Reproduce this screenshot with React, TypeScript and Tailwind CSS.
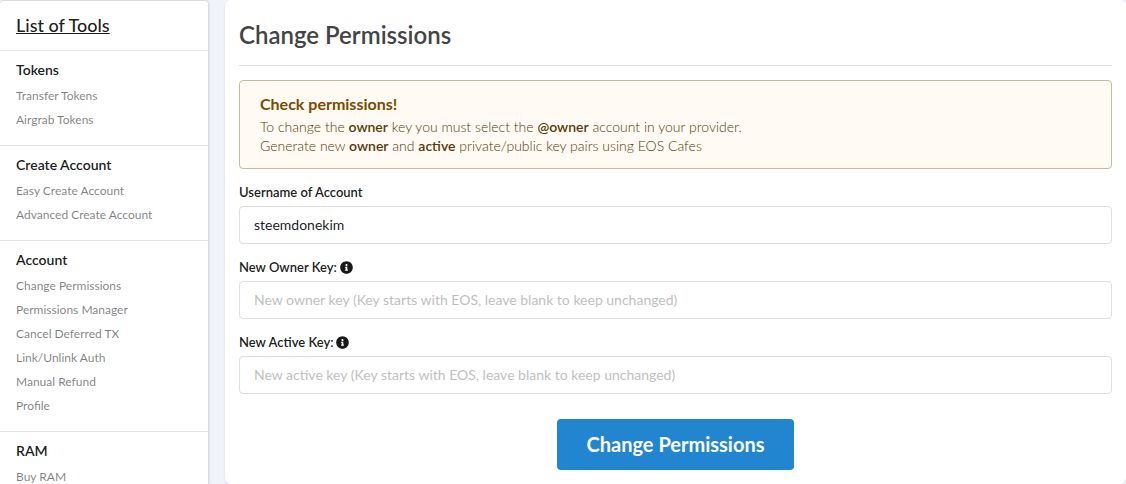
import { useState } from "react";
import type { ReactNode } from "react";
import { FaInfoCircle } from "react-icons/fa";

const toolGroups = [
    { title: "Tokens", items: ["Transfer Tokens", "Airgrab Tokens"] },
    {
        title: "Create Account",
        items: ["Easy Create Account", "Advanced Create Account"],
    },
    {
        title: "Account",
        items: [
            "Change Permissions",
            "Permissions Manager",
            "Cancel Deferred TX",
            "Link/Unlink Auth",
            "Manual Refund",
            "Profile",
        ],
    },
    { title: "RAM", items: ["Buy RAM"] },
];

function Sidebar() {
    return (
        <nav className="w-[209px] shrink-0 overflow-hidden rounded-t border-t border-r border-[#d9dadd] bg-white shadow-sm">
            <h2 className="px-4 pt-3 pb-3 text-lg leading-[25px] font-medium text-black/90">
                <a href="#tools" className="underline">
                    List of Tools
                </a>
            </h2>

            {toolGroups.map((group) => (
                <section
                    key={group.title}
                    className="border-t border-[#e3e4e5] px-4 pt-[9px] pb-[13px]"
                >
                    <h3 className="mb-1 text-sm font-semibold text-black/90">
                        {group.title}
                    </h3>
                    <ul>
                        {group.items.map((item) => (
                            <li key={item} className="h-6 text-xs leading-6">
                                <a href="#tool" className="text-black/50">
                                    {item}
                                </a>
                            </li>
                        ))}
                    </ul>
                </section>
            ))}
        </nav>
    );
}

type FieldProps = {
    id: string;
    label: string;
    value: string;
    onChange: (value: string) => void;
    placeholder?: string;
    icon?: ReactNode;
};

function Field({ id, label, value, onChange, placeholder, icon }: FieldProps) {
    return (
        <div className="mb-[14px]">
            <label
                htmlFor={id}
                className="mb-1 flex h-[19px] items-center gap-[3px] text-[13px] font-semibold text-black/90"
            >
                {label}
                {icon}
            </label>
            <input
                id={id}
                type="text"
                value={value}
                placeholder={placeholder}
                onChange={(e) => onChange(e.target.value)}
                className="block h-[38px] w-full rounded border border-[#dededf] bg-white px-[14px] pb-[2px] text-sm text-black/90 outline-none placeholder:text-[#bfbfbf]"
            />
        </div>
    );
}

export default function App() {
    const [username, setUsername] = useState("steemdonekim");
    const [ownerKey, setOwnerKey] = useState("");
    const [activeKey, setActiveKey] = useState("");

    const infoIcon = <FaInfoCircle size={13} />;

    return (
        <div className="flex h-screen gap-4 overflow-hidden bg-[#f0f2fc] font-['Lato',sans-serif]">
            <Sidebar />

            <main className="min-w-0 flex-1 rounded-md bg-white px-[14px] pt-[19px] shadow">
                <h1 className="mb-[14px] border-b border-[#dededf] pb-[14px] text-2xl leading-8 font-semibold text-[#424445]">
                    Change Permissions
                </h1>

                {/* Warning message */}
                <div className="mb-[14px] rounded border border-[#c9ba9b] bg-[#fffaf3] px-5 pt-3 pb-[13px] text-sm leading-[19px] font-light text-[#573a08]">
                    <h2 className="mb-[2px] text-base leading-[22px] font-bold text-[#794b02]">
                        Check permissions!
                    </h2>
                    <p>
                        To change the <b className="font-semibold">owner</b> key
                        you must select the{" "}
                        <b className="font-semibold">@owner</b> account in your
                        provider.
                    </p>
                    <p>
                        Generate new <b className="font-semibold">owner</b> and{" "}
                        <b className="font-semibold">active</b> private/public
                        key pairs using EOS Cafes
                    </p>
                </div>

                <form onSubmit={(e) => e.preventDefault()}>
                    <Field
                        id="username"
                        label="Username of Account"
                        value={username}
                        onChange={setUsername}
                    />
                    <Field
                        id="owner-key"
                        label="New Owner Key:"
                        value={ownerKey}
                        onChange={setOwnerKey}
                        placeholder="New owner key (Key starts with EOS, leave blank to keep unchanged)"
                        icon={infoIcon}
                    />
                    <Field
                        id="active-key"
                        label="New Active Key:"
                        value={activeKey}
                        onChange={setActiveKey}
                        placeholder="New active key (Key starts with EOS, leave blank to keep unchanged)"
                        icon={infoIcon}
                    />

                    <div className="mt-[25px] flex justify-center">
                        <button
                            type="submit"
                            className="rounded bg-[#2185d0] px-[30px] py-3 text-xl leading-[27px] font-bold text-white"
                        >
                            Change Permissions
                        </button>
                    </div>
                </form>
            </main>
        </div>
    );
}
